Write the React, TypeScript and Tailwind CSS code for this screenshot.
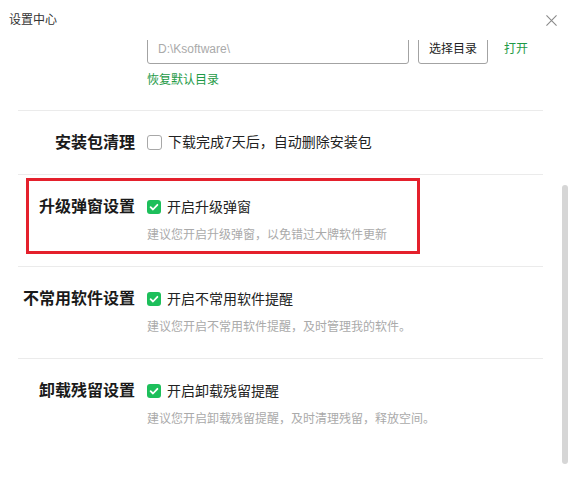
import React from 'react';

const FONT = "font-['Liberation_Sans','Noto_Sans_CJK_SC',sans-serif]";

interface ToggleSection {
  label: string;
  option: string;
  hint: string;
  highlight?: boolean;
}

const sections: ToggleSection[] = [
  { label: '升级弹窗设置', option: '开启升级弹窗', hint: '建议您开启升级弹窗，以免错过大牌软件更新', highlight: true },
  { label: '不常用软件设置', option: '开启不常用软件提醒', hint: '建议您开启不常用软件提醒，及时管理我的软件。' },
  { label: '卸载残留设置', option: '开启卸载残留提醒', hint: '建议您开启卸载残留提醒，及时清理残留，释放空间。' },
];

const CheckBox: React.FC<{ checked?: boolean }> = ({ checked }) =>
  checked ? (
    <span className="flex h-[14px] w-[14px] shrink-0 items-center justify-center rounded-[3px] bg-[#1dbf5b]">
      <svg viewBox="0 0 14 14" className="h-[14px] w-[14px]" fill="none">
        <path d="M3.6 7.2 L6 9.5 L10.4 4.8" stroke="#fff" strokeWidth="1.8" strokeLinecap="round" strokeLinejoin="round" />
      </svg>
    </span>
  ) : (
    <span className="h-[15px] w-[15px] shrink-0 rounded-[3px] border border-[#a8a8a8] bg-white" />
  );

const Label: React.FC<{ text: string }> = ({ text }) => (
  <div className="w-[117px] shrink-0 text-right text-[16px] font-bold leading-[22px] text-[#1a1a1a]">{text}</div>
);

export default function App() {
  return (
    <div className={`relative h-[477px] w-[568px] overflow-hidden bg-white ${FONT}`}>
      {/* header */}
      <div className="flex h-10 items-center justify-between pl-[9px] pr-[11px]">
        <span className="text-[12px] leading-none text-[#333]">设置中心</span>
        <svg viewBox="0 0 12 12" className="h-[11px] w-[11px]" stroke="#8a8a8a" strokeWidth="1.2">
          <path d="M0.5 0.5 L11.5 11.5 M11.5 0.5 L0.5 11.5" />
        </svg>
      </div>

      {/* scrolled content */}
      <div className="h-[437px] overflow-hidden">
        <div className="-mt-[6px] pl-[18px] pr-[25px]">
          {/* download dir */}
          <div className="pl-[129px] pb-[22px]">
            <div className="flex items-center">
              <div className="flex h-[30px] w-[262px] items-center rounded-[3px] border border-[#a3a3a3] pl-[10px] text-[12px] text-[#aaa]">
                D:\Ksoftware\
              </div>
              <button className="ml-[9px] flex h-[30px] w-[70px] items-center justify-center rounded-[3px] border border-[#a3a3a3] text-[12px] text-[#222]">
                选择目录
              </button>
              <span className="ml-[16px] text-[12px] text-[#1e9a46]">打开</span>
            </div>
            <div className="mt-[8px] text-[12px] leading-[16px] text-[#1e9a46]">恢复默认目录</div>
          </div>

          {/* package cleanup */}
          <div className="flex h-[64px] items-center gap-[12px] border-t border-[#ebebeb]">
            <Label text="安装包清理" />
            <div className="flex items-center gap-[6px] text-[14px] text-[#222]">
              <CheckBox />
              <span>下载完成7天后，自动删除安装包</span>
            </div>
          </div>

          {sections.map((s) => (
            <div key={s.label} className="relative h-[92px] border-t border-[#ebebeb] pt-[21px]">
              {s.highlight && (
                <div className="absolute left-[8px] top-[3px] h-[76px] w-[394px] border-[3px] border-[#e4202c]" />
              )}
              <div className="flex items-center gap-[12px]">
                <Label text={s.label} />
                <div className="flex items-center gap-[6px] text-[14px] leading-[22px] text-[#222]">
                  <CheckBox checked />
                  <span>{s.option}</span>
                </div>
              </div>
              <div className="mt-[7px] pl-[129px] text-[12px] leading-[20px] text-[#aaa]">{s.hint}</div>
            </div>
          ))}
        </div>
      </div>

      {/* scrollbar thumb */}
      <div className="absolute right-0 top-[185px] h-[279px] w-[6px] rounded-[3px] bg-[#d6d6d6]" />
    </div>
  );
}
